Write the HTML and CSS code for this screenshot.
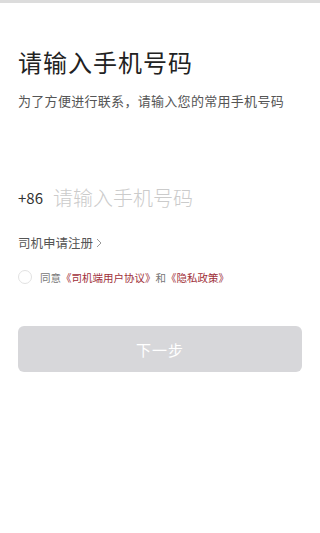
FILE: index.html
```html
<!DOCTYPE html>
<html lang="zh">
<head>
<meta charset="utf-8">
<link rel="stylesheet" href="styles.css">
</head>
<body>
<div class="topbar"></div>
<main class="page">
  <h1 class="title">请输入手机号码</h1>
  <p class="subtitle">为了方便进行联系，请输入您的常用手机号码</p>
  <div class="phone-row">
    <span class="prefix">+86</span>
    <span class="placeholder">请输入手机号码</span>
  </div>
  <div class="register">司机申请注册<svg class="chev" width="6" height="10" viewBox="0 0 6 10"><path d="M1 1l4 4-4 4" fill="none" stroke="#999" stroke-width="1"/></svg></div>
  <div class="agree">
    <span class="circle"></span>
    <span class="agree-text">同意<span class="link">《司机端用户协议》</span>和<span class="link">《隐私政策》</span></span>
  </div>
  <div class="btn">下一步</div>
</main>
</body>
</html>
```
FILE: styles.css
```css
* { box-sizing: border-box; }
html, body { margin: 0; padding: 0; background: #fff; }
body {
  font-family: "Noto Sans CJK SC", "Noto Sans", sans-serif;
  width: 320px;
  height: 533px;
  overflow: hidden;
}
.topbar {
  height: 3px;
  background: #dcdcdc;
}
.page {
  padding: 0 18px;
  display: flex;
  flex-direction: column;
}
.title {
  margin: 42px 0 0;
  font-size: 24px;
  line-height: 34px;
  font-weight: 400;
  color: #222;
  letter-spacing: 1px;
}
.subtitle {
  margin: 12px 0 0;
  font-size: 13px;
  line-height: 20px;
  color: #555;
  letter-spacing: 0.3px;
}
.phone-row {
  margin-top: 72px;
  display: flex;
  align-items: center;
  height: 28px;
}
.prefix {
  font-size: 15px;
  color: #333;
  width: 35px;
}
.placeholder {
  font-size: 20px;
  font-weight: 300;
  color: #cbcbcb;
}
.register {
  margin-top: 23px;
  font-size: 12.5px;
  line-height: 18px;
  color: #555;
  display: flex;
  align-items: center;
}
.chev { margin-left: 3px; }
.agree {
  margin-top: 16px;
  display: flex;
  align-items: center;
  height: 18px;
}
.circle {
  width: 14px;
  height: 14px;
  border: 1px solid #e2e2e2;
  border-radius: 50%;
  margin-right: 8px;
}
.agree-text {
  font-size: 10.5px;
  color: #777;
}
.link { color: #a0303a; }
.btn {
  margin-top: 40px;
  height: 46px;
  border-radius: 6px;
  background: #d7d7da;
  color: #fff;
  font-size: 15px;
  display: flex;
  align-items: center;
  justify-content: center;
  letter-spacing: 1px;
}
```
